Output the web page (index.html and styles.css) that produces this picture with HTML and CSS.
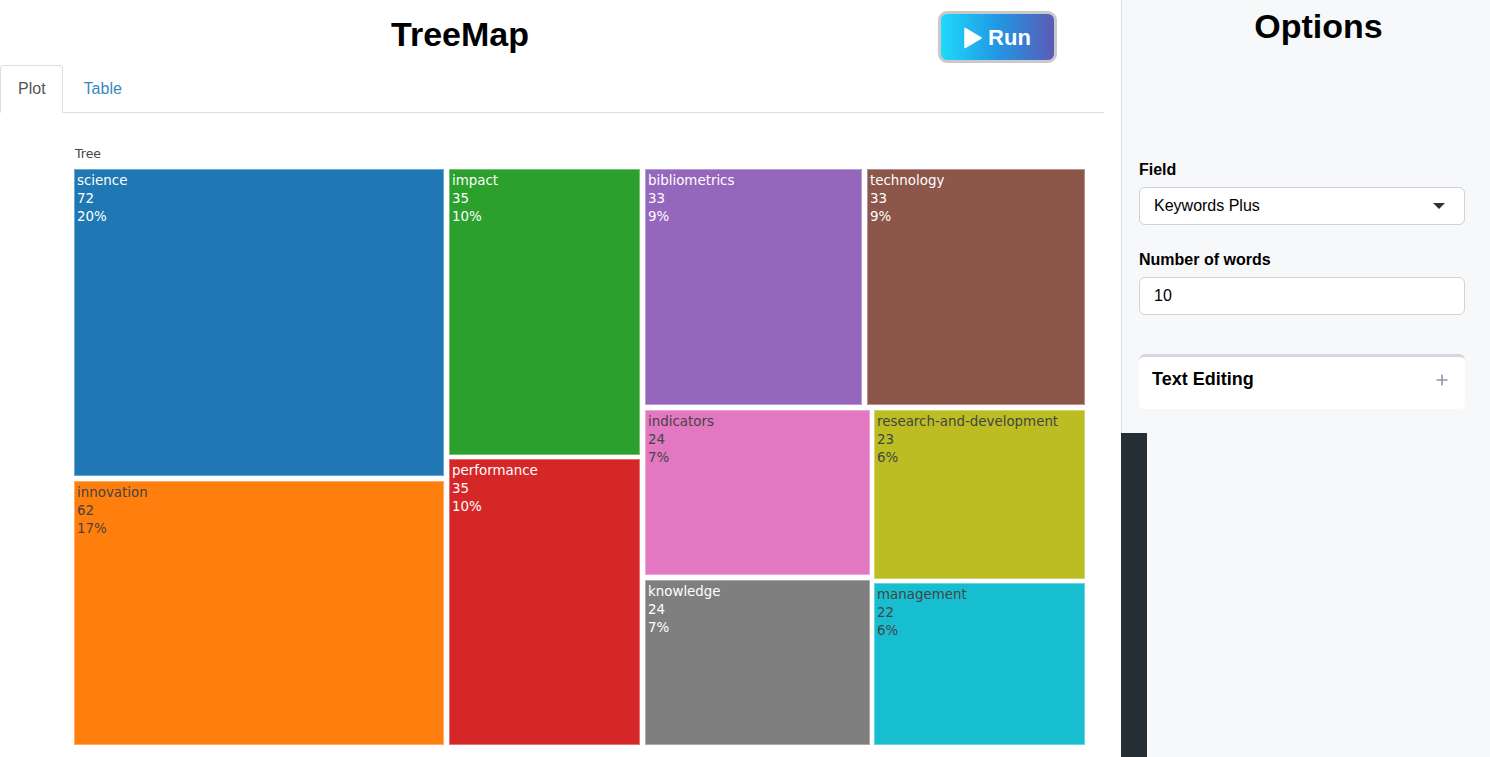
FILE: index.html
```html
<!DOCTYPE html>
<html lang="en">
<head>
<meta charset="utf-8">
<title>TreeMap</title>
<link rel="stylesheet" href="styles.css">
</head>
<body>
<div class="layout">
  <main class="main">
    <header class="title-row">
      <h2 class="page-title">TreeMap</h2>
      <div class="run-wrap">
        <button class="run-btn" type="button">
          <svg class="play" width="18" height="22" viewBox="0 0 18 22"><path d="M1 1.5 L17 11 L1 20.5 Z" fill="#fff" stroke="#fff" stroke-width="1.5" stroke-linejoin="round"/></svg>
          <span>Run</span>
        </button>
      </div>
    </header>
    <nav class="tabs">
      <a class="tab active">Plot</a>
      <a class="tab">Table</a>
    </nav>
    <section class="plot">
      <div class="root-label">Tree</div>
      <div class="treemap">
        <div class="col" style="width:370px">
          <div class="tile dark c-science" style="height:307px"><div>science</div><div>72</div><div>20%</div></div>
          <div class="tile light c-innovation" style="height:264px"><div>innovation</div><div>62</div><div>17%</div></div>
        </div>
        <div class="col col-b" style="width:191px">
          <div class="tile dark c-impact" style="height:286px"><div>impact</div><div>35</div><div>10%</div></div>
          <div class="tile dark c-performance" style="height:286px"><div>performance</div><div>35</div><div>10%</div></div>
        </div>
        <div class="col" style="width:440px">
          <div class="row" style="height:236px">
            <div class="tile dark c-bibliometrics" style="width:217px"><div>bibliometrics</div><div>33</div><div>9%</div></div>
            <div class="tile dark c-technology" style="width:218px"><div>technology</div><div>33</div><div>9%</div></div>
          </div>
          <div class="row row-bottom" style="height:335px">
            <div class="col" style="width:225px">
              <div class="tile light c-indicators" style="height:165px"><div>indicators</div><div>24</div><div>7%</div></div>
              <div class="tile dark c-knowledge" style="height:165px"><div>knowledge</div><div>24</div><div>7%</div></div>
            </div>
            <div class="col col-b" style="width:211px">
              <div class="tile light c-research" style="height:169px"><div>research-and-development</div><div>23</div><div>6%</div></div>
              <div class="tile light c-management" style="height:162px"><div>management</div><div>22</div><div>6%</div></div>
            </div>
          </div>
        </div>
      </div>
    </section>
  </main>
  <aside class="sidebar">
    <h2 class="side-title">Options</h2>
    <div class="field">
      <label class="field-label">Field</label>
      <div class="select">
        <span>Keywords Plus</span>
        <span class="caret"></span>
      </div>
    </div>
    <div class="field">
      <label class="field-label">Number of words</label>
      <div class="input">10</div>
    </div>
    <div class="card">
      <span class="card-title">Text Editing</span>
      <svg class="plus" width="12" height="12" viewBox="0 0 12 12"><path d="M6 0.5 V11.5 M0.5 6 H11.5" stroke="#8e97a8" stroke-width="1.6"/></svg>
    </div>
    <div class="dark-strip"></div>
  </aside>
</div>
</body>
</html>
```
FILE: styles.css
```css
* { box-sizing: border-box; }
html, body { margin: 0; padding: 0; }
body {
  font-family: "Liberation Sans", Arial, sans-serif;
  color: #000;
  background: #fff;
  width: 1490px;
  height: 757px;
  overflow: hidden;
}
.layout {
  display: flex;
  height: 757px;
}
.main {
  width: 1104px;
  flex: none;
}
.title-row {
  display: flex;
  align-items: flex-start;
  height: 65px;
}
.page-title {
  width: 920px;
  margin: 0;
  padding-top: 14px;
  text-align: center;
  font-size: 34px;
  line-height: 40px;
  font-weight: 700;
}
.run-wrap {
  padding-left: 18px;
  padding-top: 11px;
}
.run-btn {
  width: 119px;
  height: 52px;
  border: 3px solid #c9c9c9;
  border-radius: 9px;
  background: linear-gradient(to right, #1fd9fa 0%, #2297e4 50%, #5a5bb6 100%);
  color: #fff;
  font-family: "Liberation Sans", Arial, sans-serif;
  font-weight: 700;
  font-size: 22px;
  display: flex;
  align-items: center;
  justify-content: center;
  gap: 6px;
  padding: 2px 0 0 0;
}
.play { display: block; margin-top: 0; }
.tabs {
  display: flex;
  height: 48px;
  border-bottom: 1px solid #dddddd;
}
.tab {
  display: block;
  padding: 13px 17px 0 17px;
  font-size: 16px;
  line-height: 20px;
  color: #3a87c0;
  border: 1px solid transparent;
  border-radius: 4px 4px 0 0;
  height: 48px;
}
.tab.active {
  color: #555;
  border-color: #dddddd;
  border-bottom-color: #fff;
  background: #fff;
  padding-left: 17px;
  padding-right: 16px;
}
.tab + .tab { margin-left: 3px; }
.plot {
  padding-left: 74px;
  padding-top: 33px;
}
.root-label {
  font-family: "DejaVu Sans", Verdana, sans-serif;
  font-size: 12.5px;
  line-height: 16px;
  color: #444;
  margin-left: 1px;
  height: 23px;
}
.treemap {
  display: flex;
  gap: 5px;
  height: 576px;
  width: 1011px;
}
.col {
  display: flex;
  flex-direction: column;
  gap: 5px;
  flex: none;
}
.col-b { gap: 4px; }
.row {
  display: flex;
  gap: 5px;
  flex: none;
}
.row-bottom { gap: 4px; }
.tile {
  flex: none;
  padding: 3px 3px 0 3px;
  font-family: "DejaVu Sans", Verdana, sans-serif;
  font-size: 13.4px;
  line-height: 18px;
  box-shadow: inset 0 0 0 1px rgba(255,255,255,0.35);
  overflow: hidden;
  white-space: nowrap;
}
.tile.dark { color: #fff; }
.tile.light { color: #444; }
.c-science { background: #1f77b4; }
.c-innovation { background: #ff7f0e; }
.c-impact { background: #2ca02c; }
.c-performance { background: #d62728; }
.c-bibliometrics { background: #9467bd; }
.c-technology { background: #8c564b; }
.c-indicators { background: #e377c2; }
.c-knowledge { background: #7f7f7f; }
.c-research { background: #bcbd22; }
.c-management { background: #17becf; }

.sidebar {
  position: relative;
  margin-left: 17px;
  width: 369px;
  flex: none;
  background: #f7f8fa;
  border-left: 1px solid #dcdee2;
  padding: 0 24px 0 17px;
}
.side-title {
  margin: 0;
  padding-top: 6px;
  padding-left: 32px;
  text-align: center;
  font-size: 34px;
  line-height: 40px;
  font-weight: 700;
  height: 159px;
}
.field { margin-bottom: 0; }
.field-label {
  display: block;
  font-weight: 700;
  font-size: 16px;
  line-height: 22px;
  height: 28px;
}
.select, .input {
  height: 38px;
  width: 326px;
  background: #fff;
  border: 1px solid #cfd2d6;
  border-radius: 6px;
  font-size: 16px;
  padding: 0 0 0 14px;
  display: flex;
  align-items: center;
  margin-bottom: 24px;
}
.select { justify-content: space-between; padding-right: 19px; }
.caret {
  width: 0;
  height: 0;
  border-left: 6px solid transparent;
  border-right: 6px solid transparent;
  border-top: 6px solid #333;
}
.input { margin-bottom: 39px; }
.card {
  width: 326px;
  height: 55px;
  background: #fff;
  border-top: 3px solid #d4d7dd;
  border-radius: 6px;
  display: flex;
  align-items: center;
  justify-content: space-between;
  padding: 0 17px 7px 13px;
}
.card-title {
  font-weight: 700;
  font-size: 18px;
}
.dark-strip {
  position: absolute;
  left: -1px;
  top: 433px;
  width: 26px;
  height: 324px;
  background: #242e33;
}
```
